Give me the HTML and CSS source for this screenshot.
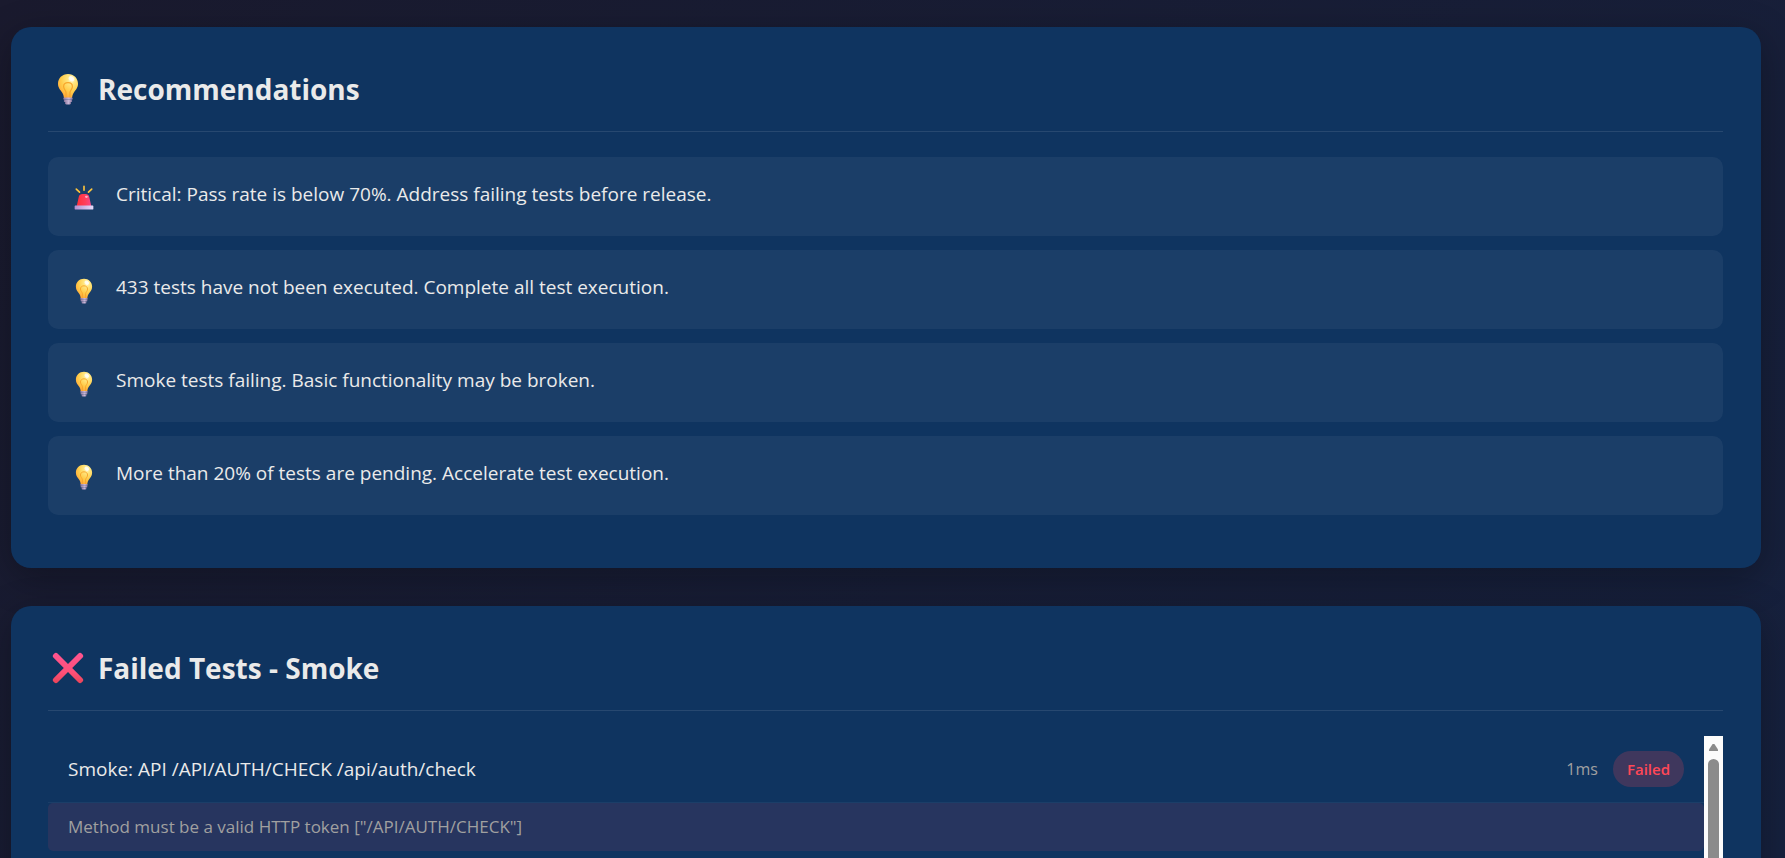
FILE: index.html
```html
<!DOCTYPE html>
<html lang="en">
<head>
  <meta charset="UTF-8">
  <meta name="viewport" content="width=device-width, initial-scale=1.0">
  <title>Test Report</title>
  <link rel="stylesheet" href="styles.css">
</head>
<body>
  <svg class="defs" aria-hidden="true">
    <defs>
      <radialGradient id="glass" cx="0.68" cy="0.22" r="0.8">
        <stop offset="0" stop-color="#fffbe0"/>
        <stop offset="0.25" stop-color="#ffe680"/>
        <stop offset="0.65" stop-color="#ffcc4a"/>
        <stop offset="1" stop-color="#ffa93a"/>
      </radialGradient>
      <linearGradient id="cap" x1="0" x2="1">
        <stop offset="0" stop-color="#8f78a0"/>
        <stop offset="0.6" stop-color="#c9b8d8"/>
        <stop offset="1" stop-color="#8d789f"/>
      </linearGradient>
      <linearGradient id="siren" x1="0" x2="1">
        <stop offset="0" stop-color="#ff2f38"/>
        <stop offset="0.6" stop-color="#ff3f5c"/>
        <stop offset="1" stop-color="#f8488c"/>
      </linearGradient>
      <linearGradient id="base" x1="0" x2="1">
        <stop offset="0" stop-color="#b18fd0"/>
        <stop offset="1" stop-color="#e6dcfa"/>
      </linearGradient>
      <linearGradient id="cross" x1="0" x2="0" y1="0" y2="1">
        <stop offset="0" stop-color="#ff5490"/>
        <stop offset="0.65" stop-color="#ff5078"/>
        <stop offset="1" stop-color="#ea4458"/>
      </linearGradient>
      <symbol id="icon-bulb" viewBox="0 0 32 32">
        <path d="M16 1C10.200 1 6 5.300 6 10.800c0 4 2.400 6.200 4.100 8.700 1.200 1.800 1.500 3.300 1.900 5.500h8c.4-2.200.7-3.700 1.900-5.500C23.600 17 26 14.800 26 10.800 26 5.300 21.800 1 16 1z" fill="url(#glass)"/>
        <path d="M14 25v-5.500c0-2-2.400-3.200-2.400-6 0-2.300 1.900-3.900 4.400-3.900s4.400 1.600 4.400 3.900c0 2.800-2.400 4-2.400 6V25" fill="none" stroke="#f7a62c" stroke-width="1.200"/>
        <ellipse cx="19.500" cy="5.800" rx="3" ry="2.300" fill="#fff" opacity="0.750" transform="rotate(35 19.500 5.800)"/>
        <rect x="11.300" y="24.500" width="9.400" height="2.200" rx="1" fill="url(#cap)"/>
        <rect x="11.800" y="26.900" width="8.400" height="2" rx="1" fill="url(#cap)"/>
        <rect x="13" y="28.800" width="6" height="2.600" rx="1.300" fill="url(#cap)"/>
      </symbol>
      <symbol id="icon-siren" viewBox="0 0 32 32">
        <path d="M16 1.500v5M6.500 5l4 3.800M25.500 5l-4 3.800" fill="none" stroke="#fdc53c" stroke-width="2" stroke-linecap="round"/>
        <path d="M7 26l2.600-11.500c.5-2.300 2.100-3.500 4.400-3.500h4c2.300 0 3.900 1.200 4.400 3.500L25 26z" fill="url(#siren)"/>
        <ellipse cx="19" cy="14.500" rx="1.800" ry="1.400" fill="#ffc0cf" opacity="0.850"/>
        <rect x="4.500" y="25.200" width="23" height="4.800" rx="0.600" fill="url(#base)"/>
      </symbol>
      <symbol id="icon-cross" viewBox="0 0 32 32">
        <path d="M1.600 5.800a2.600 2.600 0 0 1 0-3.600l.5-.5a2.600 2.600 0 0 1 3.700 0L16 12l10.200-10.300a2.600 2.600 0 0 1 3.700 0l.5.5a2.600 2.600 0 0 1 0 3.600L20.200 16l10.200 10.200a2.600 2.600 0 0 1 0 3.600l-.5.5a2.600 2.600 0 0 1-3.700 0L16 20 5.800 30.300a2.600 2.600 0 0 1-3.700 0l-.5-.5a2.600 2.600 0 0 1 0-3.600L11.800 16z" fill="url(#cross)"/>
      </symbol>
    </defs>
  </svg>

  <main class="container">
    <section class="card">
      <h2 class="section-title">
        <svg class="title-icon" aria-hidden="true"><use href="#icon-bulb"/></svg>
        Recommendations
      </h2>
      <ul class="recommendations">
        <li class="recommendation">
          <svg class="rec-icon" aria-hidden="true"><use href="#icon-siren"/></svg>
          <span>Critical: Pass rate is below 70%. Address failing tests before release.</span>
        </li>
        <li class="recommendation">
          <svg class="rec-icon" aria-hidden="true"><use href="#icon-bulb"/></svg>
          <span>433 tests have not been executed. Complete all test execution.</span>
        </li>
        <li class="recommendation">
          <svg class="rec-icon" aria-hidden="true"><use href="#icon-bulb"/></svg>
          <span>Smoke tests failing. Basic functionality may be broken.</span>
        </li>
        <li class="recommendation">
          <svg class="rec-icon" aria-hidden="true"><use href="#icon-bulb"/></svg>
          <span>More than 20% of tests are pending. Accelerate test execution.</span>
        </li>
      </ul>
    </section>

    <section class="card">
      <h2 class="section-title">
        <svg class="title-icon" aria-hidden="true"><use href="#icon-cross"/></svg>
        Failed Tests - Smoke
      </h2>
      <div class="test-panel">
        <div class="test-list">
          <div class="test-item">
            <span class="test-name">Smoke: API /API/AUTH/CHECK /api/auth/check</span>
            <span class="test-duration">1ms</span>
            <span class="status failed">Failed</span>
          </div>
          <div class="test-error">Method must be a valid HTTP token ["/API/AUTH/CHECK"]</div>
        </div>
        <div class="scrollbar" aria-hidden="true">
          <span class="scroll-arrow"></span>
          <span class="scroll-thumb"></span>
        </div>
      </div>
    </section>
  </main>
</body>
</html>
```
FILE: styles.css
```css
* {
  box-sizing: border-box;
  margin: 0;
  padding: 0;
}
body {
  font-family: "Segoe UI", "Open Sans", "Noto Sans", sans-serif;
  font-size: 19px;
  line-height: 32px;
  background: linear-gradient(135deg, #1a1a2e 0%, #16213e 100%);
  color: #eaeaea;
  height: 100vh;
  overflow: hidden;
}
.defs {
  position: absolute;
  width: 0;
  height: 0;
}
.container {
  display: flex;
  flex-direction: column;
  gap: 38px;
  height: 100vh;
  overflow: hidden;
  padding: 27px 24px 0 11px;
}
.card {
  flex: none;
  background: #0f3460;
  border-radius: 20px;
  padding: 38px 38px 38px 37px;
  box-shadow: 0 10px 38px rgba(0, 0, 0, 0.3);
}
.section-title {
  display: flex;
  align-items: center;
  gap: 10px;
  font-size: 28px;
  font-weight: bold;
  line-height: 48px;
  padding-bottom: 18px;
  margin-bottom: 25px;
  border-bottom: 1px solid rgba(255, 255, 255, 0.1);
}
.title-icon {
  width: 40px;
  height: 32px;
}
.recommendations {
  display: flex;
  flex-direction: column;
  gap: 14px;
  padding-bottom: 15px;
  list-style: none;
}
.recommendation {
  display: flex;
  align-items: center;
  gap: 18px;
  padding: 20px 22px 25px;
  background: rgba(255, 255, 255, 0.05);
  border-radius: 10px;
}
.rec-icon {
  width: 28px;
  height: 26px;
  margin-top: 8px;
}
.test-panel {
  display: flex;
  height: 500px;
}
.test-list {
  flex: 1;
}
.test-item {
  display: flex;
  align-items: center;
  gap: 15px;
  padding: 15px 20px;
  border-bottom: 1px solid rgba(255, 255, 255, 0.05);
}
.test-name {
  flex: 1;
}
.test-duration {
  font-size: 16px;
  color: #a0a0a0;
}
.status {
  padding: 2px 14px;
  border-radius: 18px;
  font-size: 15px;
  font-weight: 600;
}
.status.failed {
  background: rgba(255, 71, 87, 0.2);
  color: #ff4757;
}
.test-error {
  padding: 8px 20px;
  font-size: 17px;
  color: #a0a0a0;
  background: rgba(255, 71, 87, 0.1);
  border-radius: 5px;
}
.scrollbar {
  display: flex;
  flex-direction: column;
  align-items: center;
  gap: 8px;
  width: 19px;
  padding-top: 8px;
  background: #fcfcfc;
}
.scroll-arrow {
  width: 9px;
  height: 7px;
  background: #8b8b8b;
  clip-path: polygon(40% 0, 60% 0, 100% 80%, 100% 100%, 0 100%, 0 80%);
}
.scroll-thumb {
  width: 11px;
  height: 300px;
  border-radius: 6px;
  background: #8b8b8b;
}
```
